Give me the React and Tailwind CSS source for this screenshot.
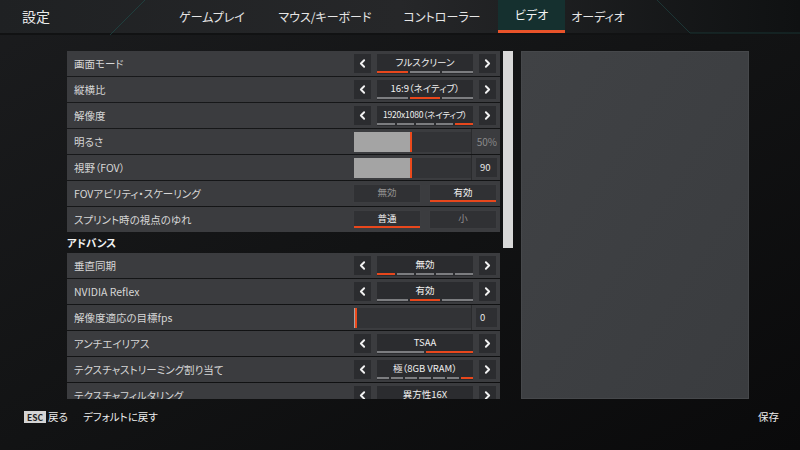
import React from 'react';
import { ChevronLeft, ChevronRight } from 'lucide-react';

const tabs = [
    { label: 'ゲームプレイ', w: 'w-[104px]' },
    { label: 'マウス/キーボード', w: 'w-[122px]' },
    { label: 'コントローラー', w: 'w-[112px]' },
    { label: 'ビデオ', w: 'w-[67px]', active: true },
    { label: 'オーディオ', w: 'w-[66px]' },
];

const Arrow = ({ dir }) => (
    <div className="w-[17px] h-[19px] bg-[#2b2c2f] flex items-center justify-center">
        {dir === 'left'
            ? <ChevronLeft size={13} strokeWidth={3.5} color="#f2f2f2" />
            : <ChevronRight size={13} strokeWidth={3.5} color="#f2f2f2" />}
    </div>
);

const Selector = ({ value, count, active, small }) => (
    <div className="flex items-center gap-[6px] pr-[4px]">
        <Arrow dir="left" />
        <div className="w-[96px] h-[20px] bg-[#2b2c2f] flex flex-col">
            <div className={`flex-1 flex items-center justify-center whitespace-nowrap text-[#f0f0f0] leading-none pt-[1px] ${small ? 'text-[8.5px] tracking-[-0.2px]' : 'text-[9.5px]'}`}>{value}</div>
            <div className="flex gap-[2px] h-[2px] mb-[1px]">
                {Array.from({ length: count }).map((_, i) => (
                    <div key={i} className={i === active ? 'flex-1 bg-[#e8471c]' : 'flex-1 bg-[#7c7d80]'} />
                ))}
            </div>
        </div>
        <Arrow dir="right" />
    </div>
);

const Slider = ({ pct, value, boxed }) => (
    <div className="flex items-stretch h-full">
        <div className="w-[117px] flex items-center">
            <div className="w-full h-[20px] bg-[#323336] flex">
                <div className="bg-[#a4a4a4] h-full" style={{ width: pct }} />
                <div className="w-[2px] h-full bg-[#ec4a1c]" />
            </div>
        </div>
        <div className="w-[1px] bg-[#2a2b2d]" />
        <div className="w-[28px] flex items-center justify-end pr-[3px]">
            {boxed ? (
                <div className="w-[21px] h-[19px] bg-[#2e2f32] flex items-center pl-[4px] text-[9.5px] text-[#e8e8e8]">{value}</div>
            ) : (
                <span className="text-[10px] text-[#8a8a8a]">{value}</span>
            )}
        </div>
    </div>
);

const Toggle = ({ options, active }) => (
    <div className="flex gap-[8px] pr-[3px]">
        {options.map((o, i) => (
            <div key={o} className="w-[68px] h-[19px] bg-[#303134] border border-[#3c3d40] flex flex-col">
                <div className={`flex-1 flex items-center justify-center text-[9.5px] ${i === active ? 'text-[#f2f2f2]' : 'text-[#909090]'}`}>{o}</div>
                <div className={`h-[2px] ${i === active ? 'bg-[#e8471c]' : ''}`} />
            </div>
        ))}
    </div>
);

const Row = ({ label, children }) => (
    <div className="h-[25px] mb-[1px] bg-[#3b3c3f] flex items-center">
        <div className="flex-1 pl-[7px] text-[10.5px] text-[#d6d6d6] whitespace-nowrap">{label}</div>
        <div className="h-full flex items-center">{children}</div>
    </div>
);

export default function App() {
    return (
        <div
            className="w-[800px] h-[450px] overflow-hidden flex flex-col bg-gradient-to-br from-[#1b1c1e] via-[#121314] to-[#0a0a0b] text-white [font-feature-settings:'palt']"
            style={{ fontFamily: "'Noto Sans CJK JP', 'Noto Sans', sans-serif" }}
        >
            {/* top bar */}
            <div className="relative h-[35px] bg-gradient-to-r from-[#1f2123] via-[#262729] to-[#0f1112] flex items-stretch border-b-[2px] border-[#111213]">
                <svg className="absolute inset-0 pointer-events-none" width="800" height="35">
                    <line x1="145" y1="0" x2="110" y2="35" stroke="#1f4a48" strokeWidth="1" opacity="0.7" />
                    <path d="M657 0 L690 33 L800 33" stroke="#1f4a48" strokeWidth="1" fill="none" opacity="0.6" />
                </svg>
                <div className="w-[160px] pl-[22px] flex items-center text-[14px] text-[#ececec]">設定</div>
                {tabs.map(t => (
                    <div
                        key={t.label}
                        className={`${t.w} relative flex items-center justify-center text-[12px] ${t.active ? 'bg-[#15302f] text-[#f4f4f4] border-b-[3px] border-[#e9532a]' : 'text-[#e6e6e6]'}`}
                    >
                        {t.label}
                    </div>
                ))}
            </div>

            {/* content */}
            <div className="flex pt-[16px] pl-[67px]">
                <div className="w-[433px] h-[348px] overflow-hidden">
                    <Row label="画面モード"><Selector value="フルスクリーン" count={3} active={0} /></Row>
                    <Row label="縦横比"><Selector value="16:9（ネイティブ）" count={3} active={1} /></Row>
                    <Row label="解像度"><Selector value="1920x1080（ネイティブ）" count={5} active={4} small /></Row>
                    <Row label="明るさ"><Slider pct="56px" value="50%" /></Row>
                    <Row label="視野（FOV）"><Slider pct="56px" value="90" boxed /></Row>
                    <Row label="FOVアビリティ・スケーリング"><Toggle options={['無効', '有効']} active={1} /></Row>
                    <Row label="スプリント時の視点のゆれ"><Toggle options={['普通', '小']} active={0} /></Row>
                    <div className="h-[20px] flex items-center text-[10.5px] font-bold text-[#f2f2f2]">アドバンス</div>
                    <Row label="垂直同期"><Selector value="無効" count={5} active={0} /></Row>
                    <Row label="NVIDIA Reflex"><Selector value="有効" count={3} active={1} /></Row>
                    <Row label="解像度適応の目標fps"><Slider pct="1px" value="0" boxed /></Row>
                    <Row label="アンチエイリアス"><Selector value="TSAA" count={2} active={1} /></Row>
                    <Row label="テクスチャストリーミング割り当て"><Selector value="極（8GB VRAM）" count={7} active={6} /></Row>
                    <Row label="テクスチャフィルタリング"><Selector value="異方性16X" count={5} active={4} /></Row>
                </div>
                <div className="ml-[3px] w-[10px] h-[348px]">
                    <div className="w-full h-[197px] bg-[#d8d8d8]" />
                </div>
                <div className="ml-[8px] w-[228px] h-[348px] bg-gradient-to-br from-[#404245] to-[#3a3c3f] border border-[#46484b]" />
            </div>

            {/* bottom bar */}
            <div className="flex items-center h-[36px] pl-[24px] pr-[21px] text-[10.5px] text-[#ececec]">
                <div className="bg-[#d4d4d4] text-[#222] text-[8.5px] font-bold leading-none px-[3px] py-[2px]">ESC</div>
                <span className="ml-[2px]">戻る</span>
                <span className="ml-[15px]">デフォルトに戻す</span>
                <span className="ml-auto">保存</span>
            </div>
        </div>
    );
}
